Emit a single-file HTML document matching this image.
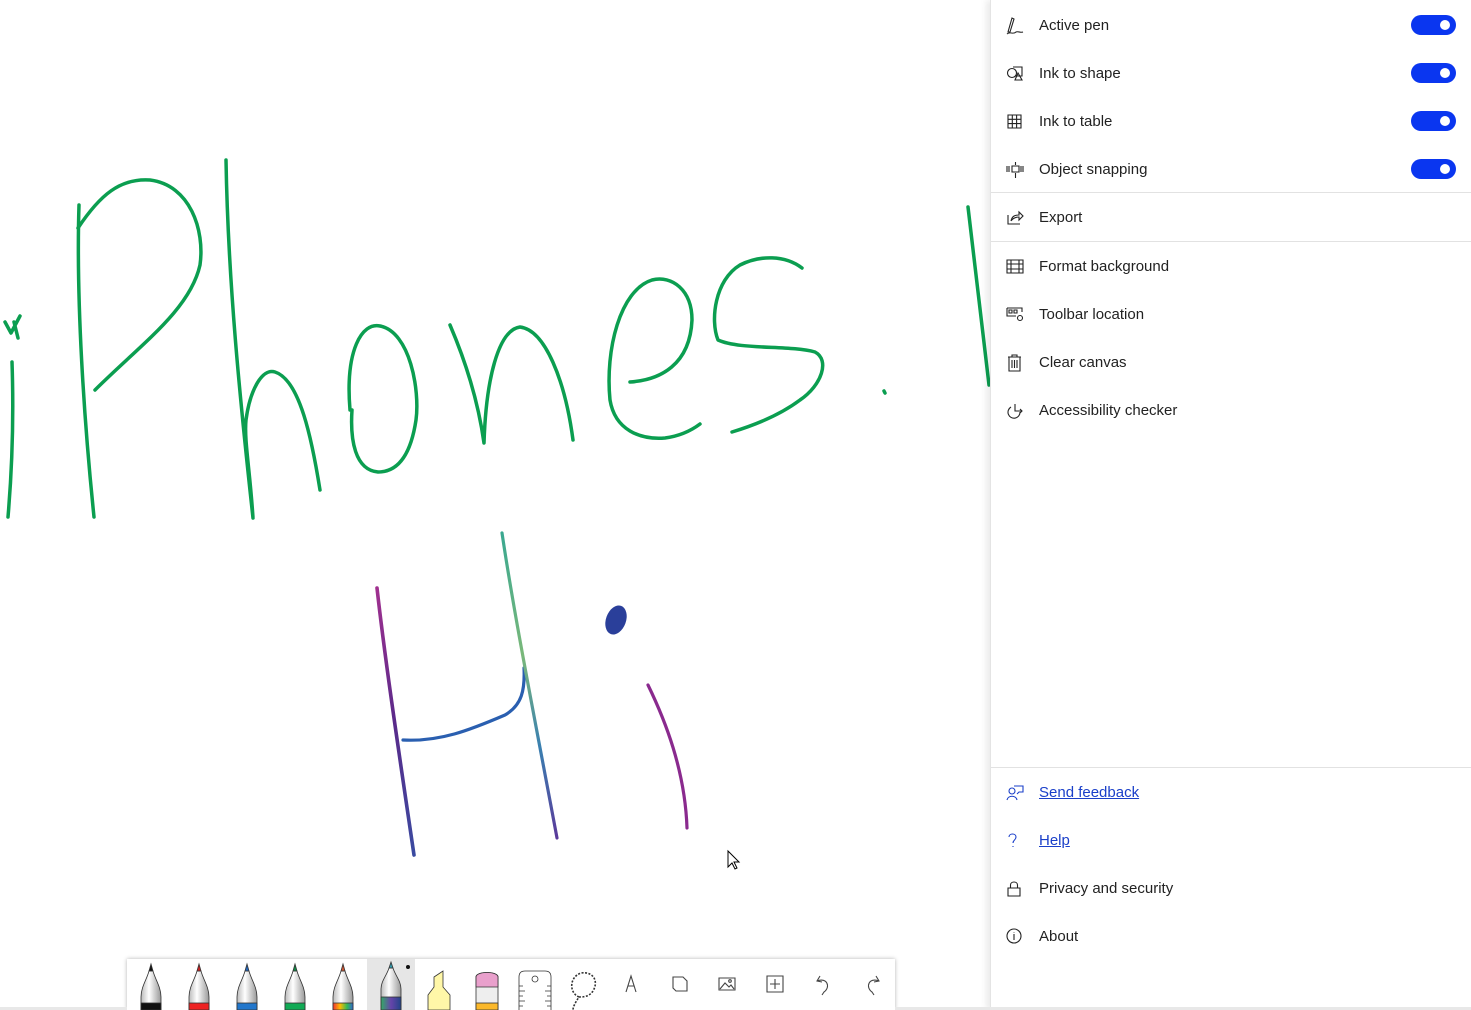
<!DOCTYPE html>
<html><head><meta charset="utf-8">
<style>
*{margin:0;padding:0;box-sizing:border-box}
body{width:1471px;height:1010px;overflow:hidden;background:#fff;font-family:"Liberation Sans",sans-serif;position:relative}
#panel{position:absolute;left:990px;top:0;width:481px;height:1010px;background:#fff;box-shadow:-4px 0 6px rgba(0,0,0,0.08);border-left:1px solid #e4e4e4}
.row{position:absolute;left:0;width:481px;height:48px;display:flex;align-items:center;font-size:15px;color:#222}
.row svg{position:absolute;left:15px;top:16px}
.row span{position:absolute;left:48px;top:16px}
.link span{color:#1a3fc9;text-decoration:underline}
.sep{position:absolute;left:0;width:481px;height:1px;background:#e2e2e2}
.tog{position:absolute;left:420px;width:45px;height:20px;border-radius:10px;background:#0a36f0}
.tog:after{content:"";position:absolute;right:6px;top:5px;width:10px;height:10px;border-radius:5px;background:#fff}
#tb{position:absolute;left:127px;top:959px;width:768px;height:51px;background:#fff;box-shadow:0 0 4px rgba(0,0,0,0.3)}
.bl{position:absolute;top:1007px;height:3px;background:#e8e8e8}
</style></head><body>
<svg width="990" height="1010" style="position:absolute;left:0;top:0">
<defs>
<linearGradient id="g1" x1="0" y1="0" x2="0" y2="1"><stop offset="0" stop-color="#a0308f"/><stop offset="0.5" stop-color="#5a2a8a"/><stop offset="1" stop-color="#3a4aa0"/></linearGradient>
<linearGradient id="g2" x1="0" y1="0" x2="0" y2="1"><stop offset="0" stop-color="#3aa890"/><stop offset="0.4" stop-color="#7ab87a"/><stop offset="0.7" stop-color="#3a80b0"/><stop offset="1" stop-color="#5a3a9a"/></linearGradient>
</defs>
<g fill="none" stroke="#0b9e50" stroke-width="3.5" stroke-linecap="round" stroke-linejoin="round">
<path d="M12 362 C14 420 12 470 8 517"/>
<path d="M5 322 L11 333 L20 316 M14 322 L18 338"/>
<path d="M79 205 C76 300 84 420 94 517"/>
<path d="M78 228 C100 195 120 178 150 180 C190 185 205 230 200 265 C190 310 140 345 95 390"/>
<path d="M226 160 C228 280 240 400 253 518 C250 470 244 440 246 420 C250 390 262 368 275 372 C300 380 312 440 320 490"/>
<path d="M350 410 C345 350 362 322 380 326 C410 332 420 390 416 420 C410 460 395 472 378 472 C355 470 350 440 352 410"/>
<path d="M450 325 C465 360 478 400 484 443 C486 380 498 330 520 327 C545 330 565 380 573 440"/>
<path d="M630 382 C660 380 690 365 692 320 C692 290 672 275 652 280 C620 290 605 350 610 400 C615 430 640 440 665 438 C680 436 692 430 700 424"/>
<path d="M802 268 C785 255 760 255 740 265 C715 280 710 320 718 340 C740 350 790 345 815 352 C830 360 822 385 800 400 C780 415 755 425 732 432"/>
<path d="M884 391 L885 393"/>
<path d="M968 207 C975 270 982 330 989 385"/>
</g>
<g fill="none" stroke-width="3.2" stroke-linecap="round" stroke-linejoin="round">
<path d="M377 588 C385 660 400 760 414 855" stroke="url(#g1)" stroke-width="3.6"/>
<path d="M403 740 C440 742 470 730 505 715 C522 705 525 690 524 668" stroke="#2a5fb0"/>
<path d="M502 533 C515 620 535 720 557 838" stroke="url(#g2)"/>
<path d="M648 685 C665 720 685 770 687 828" stroke="#8a2a8e"/>
</g>
<ellipse cx="616" cy="620" rx="10" ry="15" fill="#2a3f9a" transform="rotate(20 616 620)"/>
<path d="M728 851 L728 867 L732 863 L735 869 L737 868 L734 862 L739 862 Z" fill="#fff" stroke="#000" stroke-width="1"/>
</svg>

<div id="panel">
<div class="row" style="top:1px"><svg width="18" height="18" fill="none" stroke="#222" stroke-width="1.1"><path d="M2 15 L6 1 L8 2 L4 15 Z M1 17 C4 14 7 18 10 15 C12 14 14 16 17 15"/></svg><span>Active pen</span><div class="tog" style="top:14px"></div></div>
<div class="row" style="top:49px"><svg width="18" height="18" fill="none" stroke="#222" stroke-width="1.1"><circle cx="6" cy="8" r="4.5"/><path d="M7 2 H16 V11 H10 M9 15 L12 8 L16 15 Z"/></svg><span>Ink to shape</span><div class="tog" style="top:14px"></div></div>
<div class="row" style="top:97px"><svg width="18" height="18" fill="none" stroke="#222" stroke-width="1.1"><path d="M2 2 H15 V15 H2 Z M6.3 2 V15 M10.6 2 V15 M2 6.3 H15 M2 10.6 H15"/></svg><span>Ink to table</span><div class="tog" style="top:14px"></div></div>
<div class="row" style="top:145px"><svg width="18" height="18" fill="none" stroke="#222" stroke-width="1.1"><path d="M1 5 V11 M3 5 V11 M15 5 V11 M17 5 V11 M6 5 H13 V11 H6 Z M9.5 1 V4 M9.5 12 V17"/></svg><span>Object snapping</span><div class="tog" style="top:14px"></div></div>
<div class="sep" style="top:192px"></div>
<div class="row" style="top:193px"><svg width="18" height="18" fill="none" stroke="#222" stroke-width="1.1"><path d="M2 6 V15 H14 M5 12 C6 7 9 6 13 6 V3 L17 7 L13 11 V8 C10 8 7 9 5 12"/></svg><span>Export</span></div>
<div class="sep" style="top:241px"></div>
<div class="row" style="top:242px"><svg width="18" height="18" fill="none" stroke="#222" stroke-width="1.1"><path d="M1 2 H17 V15 H1 Z M1 6 H17 M1 11 H17 M5 2 V15 M13 2 V15"/></svg><span>Format background</span></div>
<div class="row" style="top:290px"><svg width="18" height="18" fill="none" stroke="#222" stroke-width="1.1"><path d="M1 2 H16 V6 M1 2 V10 H10 M3 4 H6 V7 H3 Z M8 4 H11 V7 H8 Z"/><circle cx="14" cy="12" r="2.5"/></svg><span>Toolbar location</span></div>
<div class="row" style="top:338px"><svg width="18" height="18" fill="none" stroke="#222" stroke-width="1.1"><path d="M2 3 H15 M6 3 V1 H11 V3 M3 3 V17 H14 V3 M6 6 V14 M8.5 6 V14 M11 6 V14"/></svg><span>Clear canvas</span></div>
<div class="row" style="top:386px"><svg width="18" height="18" fill="none" stroke="#222" stroke-width="1.1"><path d="M5 5 A6 6 0 1 0 14 10 M9 2 V9 H16 M14 7 L16 9 L14 11"/></svg><span>Accessibility checker</span></div>
<div class="sep" style="top:767px"></div>
<div class="row link" style="top:768px"><svg width="18" height="18" fill="none" stroke="#1a3fc9" stroke-width="1.1"><circle cx="6" cy="7" r="3"/><path d="M1 16 C2 11 10 11 11 16 M8 2 H17 V8 H13 L11 10"/></svg><span>Send feedback</span></div>
<div class="row link" style="top:816px"><svg width="18" height="18" fill="none" stroke="#1a3fc9" stroke-width="1.1"><path d="M3 5 C3 1 10 1 10 5 C10 8 7 8 7 11 M7 14 V15"/></svg><span>Help</span></div>
<div class="row" style="top:864px"><svg width="18" height="18" fill="none" stroke="#222" stroke-width="1.1"><path d="M2 8 H14 V16 H2 Z M4.5 8 V5 C4.5 1 11.5 1 11.5 5 V8"/></svg><span>Privacy and security</span></div>
<div class="row" style="top:912px"><svg width="18" height="18" fill="none" stroke="#222" stroke-width="1.1"><circle cx="8" cy="8" r="7"/><path d="M8 6 V12 M8 4 V4.5"/></svg><span>About</span></div>
</div>

<div id="tb">
<svg width="768" height="51" style="position:absolute;left:0;top:0">
<rect x="240" y="0" width="48" height="51" fill="#e6e6e6"/>
<defs>
<linearGradient id="pen" x1="0" x2="1"><stop offset="0" stop-color="#bbb"/><stop offset="0.4" stop-color="#fff"/><stop offset="1" stop-color="#999"/></linearGradient>
<linearGradient id="rb" x1="0" x2="1"><stop offset="0" stop-color="#e33"/><stop offset="0.35" stop-color="#fb0"/><stop offset="0.7" stop-color="#3b5"/><stop offset="1" stop-color="#36c"/></linearGradient>
<linearGradient id="gl" x1="0" x2="1"><stop offset="0" stop-color="#3a6"/><stop offset="0.5" stop-color="#64a"/><stop offset="1" stop-color="#248"/></linearGradient>
</defs>
<g stroke="#333" stroke-width="0.8">
<g transform="translate(24,0)"><path d="M-10 51 V38 C-10 28 -4 20 -2 12 H2 C4 20 10 28 10 38 V51 Z" fill="url(#pen)"/><path d="M-2 12 L0 5 L2 12 Z" fill="#111"/><rect x="-10" y="44" width="20" height="7" fill="#111"/></g>
<g transform="translate(72,0)"><path d="M-10 51 V38 C-10 28 -4 20 -2 12 H2 C4 20 10 28 10 38 V51 Z" fill="url(#pen)"/><path d="M-2 12 L0 5 L2 12 Z" fill="#c22"/><rect x="-10" y="44" width="20" height="7" fill="#e22"/></g>
<g transform="translate(120,0)"><path d="M-10 51 V38 C-10 28 -4 20 -2 12 H2 C4 20 10 28 10 38 V51 Z" fill="url(#pen)"/><path d="M-2 12 L0 5 L2 12 Z" fill="#26b"/><rect x="-10" y="44" width="20" height="7" fill="#27c"/></g>
<g transform="translate(168,0)"><path d="M-10 51 V38 C-10 28 -4 20 -2 12 H2 C4 20 10 28 10 38 V51 Z" fill="url(#pen)"/><path d="M-2 12 L0 5 L2 12 Z" fill="#184"/><rect x="-10" y="44" width="20" height="7" fill="#1a5"/></g>
<g transform="translate(216,0)"><path d="M-10 51 V38 C-10 28 -4 20 -2 12 H2 C4 20 10 28 10 38 V51 Z" fill="url(#pen)"/><path d="M-2 12 L0 5 L2 12 Z" fill="#c53"/><rect x="-10" y="44" width="20" height="7" fill="url(#rb)"/></g>
<g transform="translate(264,0)"><path d="M-10 51 V30 C-10 22 -4 16 -2 9 H2 C4 16 10 22 10 30 V51 Z" fill="url(#pen)"/><path d="M-2 9 L0 3 L2 9 Z" fill="#39a"/><rect x="-10" y="38" width="20" height="13" fill="url(#gl)"/></g>
<g transform="translate(312,0)"><path d="M-11 51 V36 L-5 28 V18 L4 12 V28 L11 36 V51 Z" fill="#fff7a8"/></g>
<g transform="translate(360,0)"><path d="M-11 51 V18 C-11 12 11 12 11 18 V51 Z" fill="#eee"/><path d="M-11 28 V18 C-11 12 11 12 11 18 V28 Z" fill="#e9a0cc"/><rect x="-11" y="44" width="22" height="7" fill="#fbb82a"/></g>
<g transform="translate(408,0)" fill="none"><path d="M-16 51 V18 C-16 14 -14 12 -10 12 H10 C14 12 16 14 16 18 V51 M-16 27 H-12 M-16 32 H-10 M-16 37 H-12 M-16 42 H-10 M-16 47 H-12 M16 27 H12 M16 32 H10 M16 37 H12 M16 42 H10 M16 47 H12"/><circle cx="0" cy="20" r="3"/></g>
<g transform="translate(456,0)" fill="none" stroke-dasharray="2 1.5" stroke-width="1.6"><path d="M-4 38 C-14 34 -14 18 -2 14 C10 12 16 22 10 32 C6 38 0 38 -4 38 C-8 44 -10 48 -10 51"/></g>
</g>
<g fill="none" stroke="#444" stroke-width="1.1">
<path d="M499 33 L504 17 L509 33 M501 27 H507"/>
<path d="M546 18 H556 L560 22 V32 H549 L546 29 Z"/>
<path d="M592 19 H608 V31 H592 Z M593 30 L598 24 L602 28 L604 26 L607 30"/><circle cx="603" cy="22" r="1.3"/>
<path d="M640 17 H656 V33 H640 Z M648 20 V30 M643 25 H653"/>
<path d="M693 17 L690 22 L695 23 M690 22 C700 18 704 28 697 33 L695 36"/>
<path d="M749 17 L752 22 L747 23 M752 22 C742 18 738 28 745 33 L747 36"/>
</g>
<circle cx="281" cy="8" r="2" fill="#111"/>
</svg>
</div>
<div class="bl" style="left:0;width:127px"></div>
<div class="bl" style="left:895px;width:576px"></div>
</body></html>
